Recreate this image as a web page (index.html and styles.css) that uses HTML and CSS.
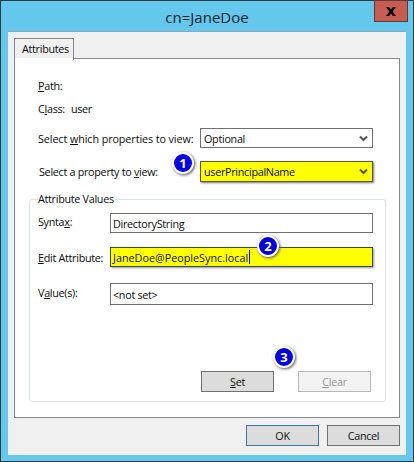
FILE: index.html
```html
<!DOCTYPE html>
<html lang="en">
<head>
<meta charset="utf-8">
<title>cn=JaneDoe</title>
<link rel="stylesheet" href="styles.css">
</head>
<body>
<div class="window">
  <header class="titlebar">
    <span class="title">cn=JaneDoe</span>
    <button class="close" aria-label="Close">
      <svg width="10" height="9" viewBox="0 0 10 9"><path d="M0 0h3l2 2.4L7 0h3L6.6 4.5 10 9H7L5 6.6 3 9H0l3.4-4.5z" fill="#000"/></svg>
    </button>
  </header>
  <div class="client">
    <div class="tabstrip"><div class="tab">Attributes</div></div>
    <div class="pane">
      <div class="info first"><span><u>P</u>ath:</span></div>
      <div class="info second"><span>C<u>l</u>ass:</span><span>user</span></div>
      <div class="row props">
        <label class="rowlabel wide">Select <u>w</u>hich properties to view:</label>
        <div class="select">Optional<svg class="chev" width="9" height="7" viewBox="0 0 9 7"><path d="M1 1.5l3.5 3.5L8 1.5" fill="none" stroke="#555" stroke-width="2"/></svg></div>
      </div>
      <div class="row prop">
        <label class="rowlabel shifted">Select a property to <u>v</u>iew:</label>
        <div class="select hot">userPrincipalName<svg class="chev" width="9" height="7" viewBox="0 0 9 7"><path d="M1 1.5l3.5 3.5L8 1.5" fill="none" stroke="#555" stroke-width="2"/></svg></div>
        <span class="badge b1">1</span>
      </div>
      <fieldset class="group">
        <legend>Attribute Values</legend>
        <div class="field syntax">
          <label>Synta<u>x</u>:</label>
          <div class="input">DirectoryString</div>
        </div>
        <div class="field edit">
          <label><u>E</u>dit Attribute:</label>
          <div class="input hot">JaneDoe@PeopleSync.local<i class="caret"></i></div>
          <span class="badge b2">2</span>
        </div>
        <div class="field values">
          <label>V<u>a</u>lue(s):</label>
          <div class="input tall">&lt;not set&gt;</div>
        </div>
        <div class="actions">
          <button class="btn"><u>S</u>et</button>
          <button class="btn off"><u>C</u>lear</button>
          <span class="badge b3">3</span>
        </div>
      </fieldset>
    </div>
    <footer class="footer">
      <button class="btn default">OK</button>
      <button class="btn">Cancel</button>
    </footer>
  </div>
</div>
</body>
</html>
```
FILE: styles.css
```css
* { box-sizing: border-box; }
html, body { margin: 0; padding: 0; }
body { width: 414px; height: 462px; overflow: hidden; font-family: "Open Sans", "Noto Sans", sans-serif; font-size: 10.8px; letter-spacing: -0.3px; color: #0c0c0c; white-space: nowrap; }
u { text-underline-offset: 1px; }

.window { width: 414px; height: 462px; background: #63c8ec; border: 1px solid #2f3b42; padding: 0 7px 6px; display: flex; flex-direction: column; }
.titlebar { height: 30px; flex: none; position: relative; display: flex; align-items: center; justify-content: center; }
.title { font-size: 15px; letter-spacing: 0; color: #10232c; margin-top: 1px; }
.close { position: absolute; right: -2px; top: -1px; width: 34px; height: 22px; padding: 0; background: #c75c50; border: 1px solid #5a3a3a; display: flex; align-items: center; justify-content: center; }

.client { flex: 1; background: #f0f0f0; border-top: 1px solid #8fa9ba; padding: 6px 6px 0; display: flex; flex-direction: column; }
.tabstrip { height: 20px; flex: none; display: flex; position: relative; z-index: 1; }
.tab { width: 60px; height: 22px; background: linear-gradient(#f0f0f0, #f0f0f0 19px, #fff 19px); border: 1px solid #88888f; border-bottom: 0; padding: 2px 0 0 7px; }
.pane { height: 360px; flex: none; background: #fff; border: 1px solid #88888f; padding: 0 14px; display: flex; flex-direction: column; position: relative; }

.info { display: flex; gap: 6px; padding-left: 9px; height: 16px; align-items: center; }
.info.first { margin-top: 18px; }
.info.second { margin-top: 7px; }
.row { display: flex; align-items: center; position: relative; padding-left: 9px; }
.rowlabel { width: 162px; flex: none; }
.rowlabel.wide { letter-spacing: -0.1px; }
.rowlabel.shifted { padding-left: 1px; }
.row.props { margin-top: 12px; }
.row.prop { margin-top: 13px; }
.select { width: 173px; height: 20px; border: 1px solid #707070; padding-left: 3px; display: flex; align-items: center; justify-content: space-between; background: #fff; }
.select .chev { margin-right: 4px; }
.select.hot { height: 21px; background: #ff0; border-color: #555; box-shadow: 1px 1px 2px #777; }

.group { margin: 9px 0 0; padding: 0 0 0 8px; width: 357px; height: 211px; border: 1px solid #dce2e8; border-radius: 3px; display: flex; flex-direction: column; min-width: 0; }
.group legend { padding: 0 1px 0 0; margin-left: 0; line-height: 16px; }
.field { display: flex; align-items: center; position: relative; }
.field label { width: 72px; flex: none; }
.field.syntax { margin-top: 6px; }
.field.syntax label { align-self: flex-start; margin-top: 1px; }
.field.values label { align-self: flex-start; margin-top: 2px; }
.field.edit { margin-top: 14px; }
.field.values { margin-top: 16px; }
.input { width: 263px; height: 20px; border: 1px solid #707070; padding-left: 2px; display: flex; align-items: center; background: #fff; }
.input.tall { height: 22px; }
.input.hot { background: #ff0; border-color: #3a4a5a; box-shadow: 1px 1px 2px #999; letter-spacing: 0; }
.caret { display: inline-block; width: 1px; height: 14px; background: #000; margin-left: 1px; }

.actions { margin-top: 66px; padding-left: 163px; display: flex; gap: 24px; position: relative; }
.btn { width: 73px; height: 21px; padding: 0; font: inherit; letter-spacing: inherit; color: #111; background: #dcdcdc; border: 1px solid #707070; }
.btn.off { background: #f3f3f3; border-color: #b8b8b8; color: #9a9a9a; }
.btn.default { border-color: #3a78a8; }

.footer { display: flex; justify-content: flex-end; gap: 8px; margin-top: 7px; }

.badge { position: absolute; width: 22px; height: 22px; border-radius: 50%; background: #0000e6; border: 2px solid #fff; color: #fff; font-size: 13px; letter-spacing: 0; font-weight: 700; display: flex; align-items: center; justify-content: center; box-shadow: 1px 1px 3px #555; }
.b1 { left: 143px; top: -9px; }
.b2 { left: 219px; top: -12px; }
.b3 { left: 235px; top: -25px; }
```
